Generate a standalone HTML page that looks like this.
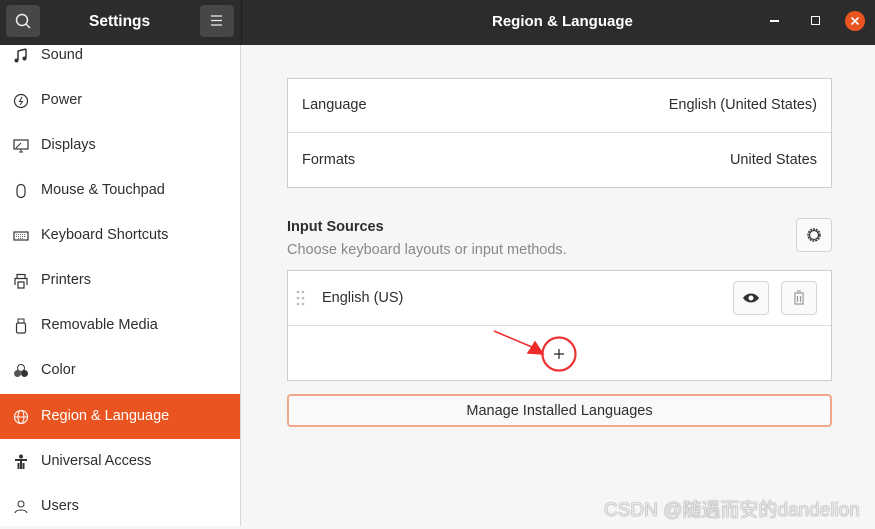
<!DOCTYPE html>
<html><head><meta charset="utf-8"><style>
*{margin:0;padding:0;box-sizing:border-box}
body{width:875px;height:526px;overflow:hidden;font-family:"Liberation Sans","Noto Sans CJK SC",sans-serif;font-size:14.5px;color:#2e2e2e;background:#f6f6f6;position:relative}
.hdr{position:absolute;left:0;top:0;width:875px;height:45px;background:#2c2c2c;color:#fff}
.hdr .sep{position:absolute;left:241px;top:0;width:1px;height:45px;background:#1e1e1e}
.hb{position:absolute;top:5px;width:34px;height:32px;background:#474747;border-radius:4px}
.side{position:absolute;left:0;top:45px;width:241px;height:481px;background:#fff;border-right:1px solid #d8d8d8}
.it{position:absolute;left:0;width:240px;height:45px;display:flex;align-items:center}
.it svg{position:absolute;left:13px;top:15px}
.it span{position:absolute;left:41px;top:14px}
.sel{background:#e95420;color:#fff}
.box{position:absolute;background:#fff;border:1px solid #cdcdcd}
.btn{position:absolute;background:#fafafa;border:1px solid #d4d4d4;border-radius:4px}
</style></head><body>
<div class="hdr">
<div class="hb" style="left:6px"><svg width="34" height="32"><circle cx="16" cy="15" r="5.5" fill="none" stroke="#eee" stroke-width="1.5"/><line x1="20" y1="19" x2="24" y2="23" stroke="#eee" stroke-width="1.5"/></svg></div>
<div style="position:absolute;left:89px;top:13px;font-weight:bold;font-size:15.5px">Settings</div>
<div class="hb" style="left:200px"><svg width="34" height="32"><path d="M11 11h11M11 15.5h11M11 20h11" stroke="#eee" stroke-width="1.3"/></svg></div>
<div class="sep"></div>
<div style="position:absolute;left:492px;top:13px;font-weight:bold;font-size:15px">Region &amp; Language</div>
<div style="position:absolute;left:770px;top:20px;width:9px;height:2px;background:#fff"></div>
<div style="position:absolute;left:811px;top:16px;width:9px;height:9px;border:1.5px solid #fff"></div>
<div style="position:absolute;left:845px;top:11px;width:20px;height:20px;border-radius:50%;background:#e95420"><svg width="20" height="20"><path d="M6.5 6.5l7 7M13.5 6.5l-7 7" stroke="#fff" stroke-width="1.6"/></svg></div>
</div>
<div class="side">
<div class="it" style="top:-12px"><svg width="16" height="16"><path d="M5 3v9M13 1v9M5 3l8-2" stroke="#333" stroke-width="1.5" fill="none"/><circle cx="3.5" cy="12.5" r="2" fill="#333"/><circle cx="11.5" cy="10.5" r="2" fill="#333"/></svg><span>Sound</span></div>
<div class="it" style="top:33px"><svg width="16" height="16"><circle cx="8" cy="8" r="6.5" fill="none" stroke="#333" stroke-width="1.2"/><path d="M9 4L6.5 8.5h3L7 12" stroke="#333" fill="none"/></svg><span>Power</span></div>
<div class="it" style="top:78px"><svg width="16" height="16"><rect x="1" y="2" width="14" height="9" fill="none" stroke="#333" stroke-width="1.2"/><path d="M3 10l5-5M6 14h4M8 11v3" stroke="#333"/></svg><span>Displays</span></div>
<div class="it" style="top:123px"><svg width="16" height="16"><rect x="4" y="1.5" width="8" height="13" rx="4" fill="none" stroke="#333" stroke-width="1.2"/></svg><span>Mouse &amp; Touchpad</span></div>
<div class="it" style="top:168px"><svg width="16" height="16"><rect x="1" y="4" width="14" height="8" fill="none" stroke="#333" stroke-width="1.2"/><path d="M3 6.5h10M3 8.5h10M5 10.5h6" stroke="#333" stroke-width=".8" stroke-dasharray="1 1"/></svg><span>Keyboard Shortcuts</span></div>
<div class="it" style="top:213px"><svg width="16" height="16"><path d="M4 5V1.5h8V5M2 12V5.5h12V12M5 9h6v6H5z" fill="none" stroke="#333" stroke-width="1.2"/></svg><span>Printers</span></div>
<div class="it" style="top:258px"><svg width="16" height="16"><rect x="3.5" y="5" width="9" height="10" rx="1.5" fill="none" stroke="#333" stroke-width="1.2"/><rect x="5" y="1" width="6" height="4" fill="none" stroke="#333"/></svg><span>Removable Media</span></div>
<div class="it" style="top:303px"><svg width="16" height="16"><circle cx="8" cy="5" r="3.5" fill="none" stroke="#333"/><circle cx="4.5" cy="10.5" r="3.5" fill="#555"/><circle cx="11.5" cy="10.5" r="3.5" fill="#333"/></svg><span>Color</span></div>
<div class="it sel" style="top:349px"><svg width="16" height="16"><circle cx="8" cy="8" r="6.5" fill="none" stroke="#fff" stroke-width="1.1"/><ellipse cx="8" cy="8" rx="3" ry="6.5" fill="none" stroke="#fff"/><path d="M1.5 8h13" stroke="#fff"/></svg><span>Region &amp; Language</span></div>
<div class="it" style="top:394px"><svg width="16" height="16"><circle cx="8" cy="2.5" r="2" fill="#333"/><path d="M2 6h12M8 6v9M5.5 9v6M10.5 9v6" stroke="#333" stroke-width="2"/></svg><span>Universal Access</span></div>
<div class="it" style="top:439px"><svg width="16" height="16"><circle cx="8" cy="5" r="3" fill="none" stroke="#333"/><path d="M2 14c1-4 11-4 12 0" fill="none" stroke="#333"/></svg><span>Users</span></div>
</div>
<div class="box" style="left:287px;top:78px;width:545px;height:110px"></div>
<div style="position:absolute;left:288px;top:132px;width:543px;height:1px;background:#ddd"></div>
<div style="position:absolute;left:302px;top:97px">Language</div>
<div style="position:absolute;right:58px;top:97px">English (United States)</div>
<div style="position:absolute;left:302px;top:152px">Formats</div>
<div style="position:absolute;right:58px;top:152px">United States</div>
<div style="position:absolute;left:287px;top:219px;font-weight:bold">Input Sources</div>
<div style="position:absolute;left:287px;top:242px;color:#888">Choose keyboard layouts or input methods.</div>
<div class="btn" style="left:796px;top:218px;width:36px;height:34px"><svg width="34" height="32"><circle cx="17" cy="16" r="6" fill="none" stroke="#333" stroke-width="1.5" stroke-dasharray="2 1"/><circle cx="17" cy="16" r="4.5" fill="none" stroke="#333" stroke-width="1.2"/></svg></div>
<div class="box" style="left:287px;top:270px;width:545px;height:111px"></div>
<div style="position:absolute;left:288px;top:325px;width:543px;height:1px;background:#ddd"></div>
<svg style="position:absolute;left:296px;top:290px" width="10" height="16"><g fill="#bbb"><circle cx="2" cy="2" r="1.3"/><circle cx="7" cy="2" r="1.3"/><circle cx="2" cy="8" r="1.3"/><circle cx="7" cy="8" r="1.3"/><circle cx="2" cy="14" r="1.3"/><circle cx="7" cy="14" r="1.3"/></g></svg>
<div style="position:absolute;left:322px;top:290px">English (US)</div>
<div class="btn" style="left:733px;top:281px;width:36px;height:34px"><svg width="34" height="32"><path d="M9 16c4-6 12-6 16 0c-4 6-12 6-16 0z" fill="#333"/><circle cx="17" cy="16" r="2.5" fill="#fff"/></svg></div>
<div class="btn" style="left:781px;top:281px;width:36px;height:34px"><svg width="34" height="32"><path d="M12 11h10M15 9h4M13 12v10h8V12M15.5 14v6M18.5 14v6" fill="none" stroke="#999" stroke-width="1.2"/></svg></div>
<svg style="position:absolute;left:490px;top:325px" width="100" height="60"><path d="M4 6L42 22L38 28L53 29L45 17L42 22" fill="#ee2a2a" stroke="#ee2a2a" stroke-width="1.5"/><circle cx="69" cy="29" r="16.5" fill="none" stroke="#e33" stroke-width="2.2"/><path d="M64 29h10M69 24v10" stroke="#222" stroke-width="1.2"/></svg>
<div style="position:absolute;left:287px;top:394px;width:545px;height:33px;border:2px solid #f0a78a;border-radius:4px;background:#f9f9f9;text-align:center;line-height:30px">Manage Installed Languages</div>
<div style="position:absolute;left:604px;top:495px;font-size:19px;color:#e8e8e8;text-shadow:0 0 1px #888,0 0 1px #888">CSDN @随遇而安的dandelion</div>
</body></html>
